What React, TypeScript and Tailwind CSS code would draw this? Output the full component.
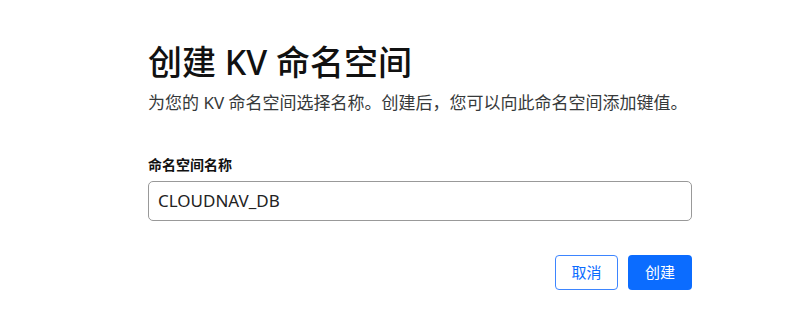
import React from "react";

export default function App() {
  return (
    <div
      className="w-[800px] h-[333px] bg-white"
      style={{ fontFamily: '"Noto Sans", "Noto Sans CJK SC", sans-serif' }}
    >
      <div className="ml-[148px] w-[544px] pt-[40px]">
        <h1 className="text-[34px] leading-[44px] text-[#111] font-medium">
          创建 KV 命名空间
        </h1>
        <p className="mt-[7px] text-[17px] leading-[24px] text-[#36393a]">
          为您的 KV 命名空间选择名称。创建后，您可以向此命名空间添加键值。
        </p>
        <label className="block mt-[40px] text-[14px] leading-[20px] font-bold text-[#111]">
          命名空间名称
        </label>
        <div className="mt-[6px] h-[40px] w-[544px] rounded-[5px] border border-[#999] flex items-center px-[9px] text-[17px] text-[#222]">
          CLOUDNAV_DB
        </div>
        <div className="mt-[34px] flex justify-end gap-[10px]">
          <button className="h-[35px] w-[63px] rounded-[4px] border border-[#3d85ff] bg-white text-[#0b6cff] text-[15px]">
            取消
          </button>
          <button className="h-[35px] w-[64px] rounded-[4px] bg-[#0b6cff] text-white text-[15px]">
            创建
          </button>
        </div>
      </div>
    </div>
  );
}
